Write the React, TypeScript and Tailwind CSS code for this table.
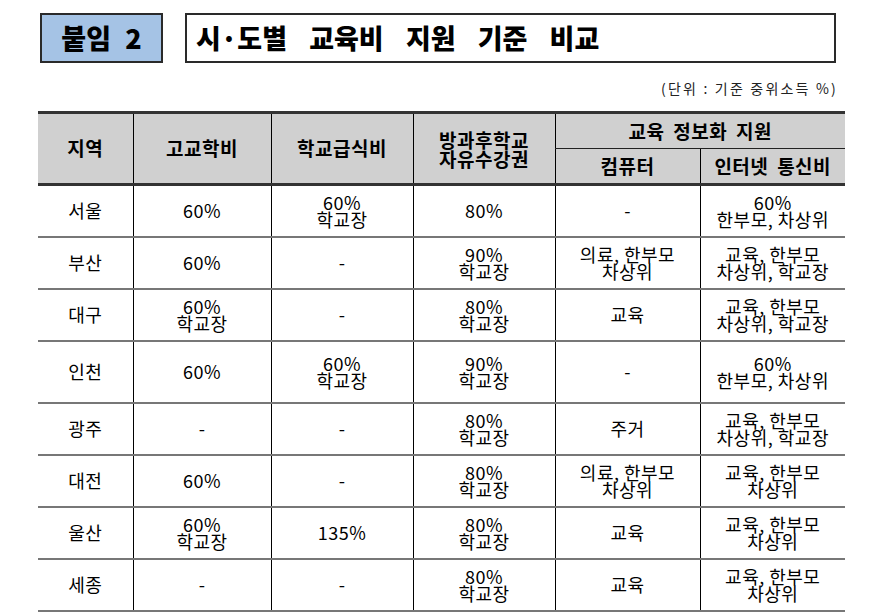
import React from 'react'

type Row = {
  region: string
  tuition: string[]
  meal: string[]
  afterSchool: string[]
  computer: string[]
  internet: string[]
  tall?: boolean
}

const rows: Row[] = [
  { region: '서울', tuition: ['60%'], meal: ['60%', '학교장'], afterSchool: ['80%'], computer: ['-'], internet: ['60%', '한부모, 차상위'] },
  { region: '부산', tuition: ['60%'], meal: ['-'], afterSchool: ['90%', '학교장'], computer: ['의료, 한부모', '차상위'], internet: ['교육, 한부모', '차상위, 학교장'] },
  { region: '대구', tuition: ['60%', '학교장'], meal: ['-'], afterSchool: ['80%', '학교장'], computer: ['교육'], internet: ['교육, 한부모', '차상위, 학교장'] },
  { region: '인천', tuition: ['60%'], meal: ['60%', '학교장'], afterSchool: ['90%', '학교장'], computer: ['-'], internet: ['60%', '한부모, 차상위'], tall: true },
  { region: '광주', tuition: ['-'], meal: ['-'], afterSchool: ['80%', '학교장'], computer: ['주거'], internet: ['교육, 한부모', '차상위, 학교장'] },
  { region: '대전', tuition: ['60%'], meal: ['-'], afterSchool: ['80%', '학교장'], computer: ['의료, 한부모', '차상위'], internet: ['교육, 한부모', '차상위'] },
  { region: '울산', tuition: ['60%', '학교장'], meal: ['135%'], afterSchool: ['80%', '학교장'], computer: ['교육'], internet: ['교육, 한부모', '차상위'] },
  { region: '세종', tuition: ['-'], meal: ['-'], afterSchool: ['80%', '학교장'], computer: ['교육'], internet: ['교육, 한부모', '차상위'] },
]

const Lines = ({ lines }: { lines: string[] }) => (
  <div className="flex flex-col items-center leading-[17px]">
    {lines.map((l, i) => (
      <span key={i}>{l}</span>
    ))}
  </div>
)

const cell = 'border-l border-black text-center align-middle p-0'

export default function App() {
  return (
    <div className="w-[883px] h-[615px] overflow-hidden bg-white text-black font-['Noto_Sans_CJK_KR','Noto_Sans',sans-serif]">
      {/* Title row */}
      <div className="flex gap-[22px] pt-[13px] pl-[40px]">
        <div className="w-[123px] h-[50px] border-2 border-[#2a2a2a] bg-[#a5c3e5] flex items-center justify-center text-[27px] font-black [word-spacing:8px]">
          붙임 2
        </div>
        <div className="w-[651px] h-[50px] border-2 border-[#2a2a2a] flex items-center pl-[9px] text-[27px] font-black [word-spacing:16px]">
          시·도별 교육비 지원 기준 비교
        </div>
      </div>

      <div className="w-[838px] text-right text-[14px] leading-[18px] mt-[16px] tracking-[2.2px] text-[#222]">
        (단위 : 기준 중위소득 %)
      </div>

      {/* Table */}
      <table className="ml-[38px] mt-[14px] w-[807px] table-fixed border-collapse">
        <colgroup>
          <col className="w-[95px]" />
          <col className="w-[138px]" />
          <col className="w-[142px]" />
          <col className="w-[142px]" />
          <col className="w-[145px]" />
          <col className="w-[145px]" />
        </colgroup>
        <thead className="bg-[#d0d0d0] font-bold text-[19px] tracking-[0.5px]">
          <tr className="h-[36px] border-t-[3px] border-[#333]">
            <th rowSpan={2} className="text-center align-middle p-0 font-bold">지역</th>
            <th rowSpan={2} className={`${cell} font-bold`}>고교학비</th>
            <th rowSpan={2} className={`${cell} font-bold`}>학교급식비</th>
            <th rowSpan={2} className={`${cell} font-bold leading-[19px]`}>
              방과후학교
              <br />
              자유수강권
            </th>
            <th colSpan={2} className={`${cell} font-bold border-b border-b-[#222] [word-spacing:4px]`}>교육 정보화 지원</th>
          </tr>
          <tr className="h-[36px] border-b-[3px] border-[#333]">
            <th className={`${cell} font-bold`}>컴퓨터</th>
            <th className={`${cell} font-bold [word-spacing:4px]`}>인터넷 통신비</th>
          </tr>
        </thead>
        <tbody className="text-[18px] tracking-[0.5px]">
          {rows.map((r) => (
            <tr key={r.region} className={`${r.tall ? 'h-[62px]' : 'h-[52px]'} border-b-2 border-[#777]`}>
              <td className="text-center align-middle p-0">{r.region}</td>
              <td className={cell}><Lines lines={r.tuition} /></td>
              <td className={cell}><Lines lines={r.meal} /></td>
              <td className={cell}><Lines lines={r.afterSchool} /></td>
              <td className={cell}><Lines lines={r.computer} /></td>
              <td className={cell}><Lines lines={r.internet} /></td>
            </tr>
          ))}
        </tbody>
      </table>
    </div>
  )
}
